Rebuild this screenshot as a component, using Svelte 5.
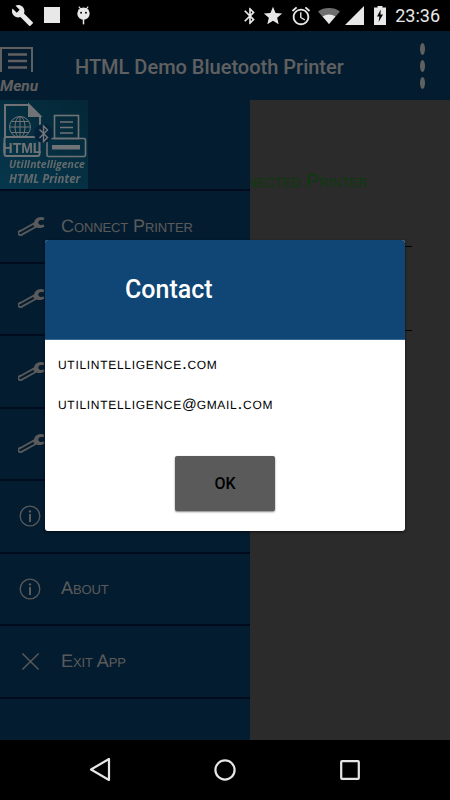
<script>
  const drawerRows = [
    { icon: 'wrench', label: 'Connect Printer' },
    { icon: 'wrench' },
    { icon: 'wrench' },
    { icon: 'wrench' },
    { icon: 'info' },
    { icon: 'info', label: 'About' },
    { icon: 'close', label: 'Exit App' }
  ];
</script>

<div class="screen">
  <header class="status">
    <div class="status-left">
      <svg class="st-wrench" viewBox="0 0 24 24"><path d="M22.7 19l-9.1-9.1c.9-2.3.4-5-1.5-6.9-2-2-5-2.4-7.4-1.3L9 6 6 9 1.6 4.7C.4 7.1.9 10.1 2.9 12.1c1.9 1.9 4.6 2.4 6.9 1.5l9.1 9.1c.4.4 1 .4 1.4 0l2.3-2.3c.5-.4.5-1.1.1-1.4z" /></svg>
      <span class="st-square"></span>
      <svg class="st-debug" viewBox="0 0 16 20">
        <path d="M3 1l2.4 3M13 1l-2.4 3" stroke="#e8e8e8" stroke-width="1.2" fill="none" />
        <circle cx="8" cy="8.5" r="6.6" />
        <circle cx="5.4" cy="7.6" r="1" fill="#000" />
        <circle cx="10.6" cy="7.6" r="1" fill="#000" />
        <rect x="7.2" y="14" width="1.6" height="6" />
      </svg>
    </div>
    <div class="status-right">
      <svg class="st-bt" viewBox="0 0 24 24"><path d="M17.71 7.71L12 2h-1v7.59L6.41 5 5 6.41 10.59 12 5 17.59 6.41 19 11 14.41V22h1l5.71-5.71-4.3-4.29 4.3-4.29zM13 5.83l1.88 1.88L13 9.59V5.83zm1.88 10.46L13 18.17v-3.76l1.88 1.88z" /></svg>
      <svg class="st-star" viewBox="0 0 24 24"><path d="M12 17.27L18.18 21l-1.64-7.03L22 9.24l-7.19-.61L12 2 9.19 8.63 2 9.24l5.46 4.73L5.82 21z" /></svg>
      <svg class="st-alarm" viewBox="0 0 24 24"><path d="M22 5.72l-4.6-3.86-1.29 1.53 4.6 3.86L22 5.72zM7.88 3.39L6.6 1.86 2 5.71l1.29 1.53 4.59-3.85zM12.5 8H11v6l4.75 2.85.75-1.23-4-2.37V8zM12 4c-4.97 0-9 4.03-9 9s4.02 9 9 9c4.97 0 9-4.03 9-9s-4.03-9-9-9zm0 16c-3.87 0-7-3.13-7-7s3.13-7 7-7 7 3.13 7 7-3.13 7-7 7z" /></svg>
      <svg class="st-wifi" viewBox="0 0 22 16">
        <path d="M11 16L0 3.4C3 1.2 6.8 0 11 0s8 1.2 11 3.4z" fill="#6e6e6e" />
        <path d="M11 16L4.6 8.6C6.4 7.3 8.6 6.6 11 6.6s4.6.7 6.4 2z" />
      </svg>
      <svg class="st-signal" viewBox="0 0 19 19"><path d="M0 19h19V0z" /></svg>
      <svg class="st-battery" viewBox="0 0 12 19">
        <path d="M3.5 0h5v1.6H12V19H0V1.6h3.5z" />
        <path d="M6.8 3.6L3 10.6h2.4L4.6 16 9 8.4H6.4z" fill="#000" />
      </svg>
      <span class="time">23:36</span>
    </div>
  </header>

  <div class="app">
    <div class="appbar">
      <div class="menu-btn">
        <svg class="menu-icon" viewBox="0 0 34 25">
          <path d="M1 25V1h31v24" fill="none" stroke="#c0c0c0" stroke-width="2" />
          <path d="M8 7.5h19M8 14h19M8 20.5h19" stroke="#c0c0c0" stroke-width="2.4" />
        </svg>
        <span class="menu-label">Menu</span>
      </div>
      <h1>HTML Demo Bluetooth Printer</h1>
      <div class="overflow">
        <span></span><span></span><span></span>
      </div>
    </div>

    <div class="main">
      <section class="content">
        <p class="connected">Connected Printer</p>
        <div class="lines"></div>
      </section>

      <nav class="drawer">
        <div class="logo-row">
          <svg class="logo" viewBox="0 0 88 89">
            <defs>
              <linearGradient id="tile" x1="0.9" y1="0" x2="0.2" y2="1">
                <stop offset="0" stop-color="#08506f" />
                <stop offset="1" stop-color="#0c6c96" />
              </linearGradient>
            </defs>
            <rect width="88" height="89" fill="url(#tile)" />
            <g fill="none" stroke="#dfe7ea" stroke-width="2">
              <path d="M5 38V5h24l11 11v22" />
              <path d="M29 5v11h11z" fill="#dfe7ea" />
              <rect x="4.5" y="37" width="35" height="19" rx="2" />
              <g stroke-width="1">
                <circle cx="20" cy="27" r="10.5" />
                <ellipse cx="20" cy="27" rx="5" ry="10.5" />
                <path d="M9.5 27h21M11 21.5h18M11 32.5h18M20 16.5v21" />
              </g>
              <rect x="54.5" y="15.5" width="24" height="23" stroke-width="1.6" />
              <path d="M60 22h13M60 27.5h13M60 33h13" stroke-width="1.6" />
              <rect x="47" y="38.5" width="38.5" height="18" rx="1.5" stroke-width="1.6" />
            </g>
            <text x="22" y="52.5" class="logo-html">HTML</text>
            <rect x="52" y="45" width="28" height="4.5" fill="#dfe7ea" />
            <circle cx="43.5" cy="33.5" r="9.5" fill="#0a4476" />
            <path d="M39.5 29.5l8 8-4 4v-15.5l4 4-8 8" fill="none" stroke="#eef2f4" stroke-width="1.4" />
            <text x="9" y="68" class="logo-text">UtilIntelligence</text>
            <text x="9" y="83" class="logo-text big">HTML Printer</text>
          </svg>
        </div>

        {#each drawerRows as row}
          <div class="row">
            <span class="row-icon">
              {#if row.icon === 'wrench'}
                <svg viewBox="0 0 28 20" class="ic-wrench">
                  <path d="M1.6 15.6L16 7.6l2 3.6-14.4 8a2 2 0 0 1-2-4z" fill="none" stroke="#b4b4b4" stroke-width="1.8" />
                  <path d="M27.4 1.4c-3-1.6-7-.8-9.2 1.6-1.2 1.4-1.8 3-1.6 4.8l2 3.4c2 1.2 5.4 1.6 8.8-.4l-.6-2.4c-2 .8-4.4.6-5.4-.8-.6-1-.4-2 .2-2.8 1-1.2 3.4-1.2 5-.8z" fill="#b4b4b4" />
                </svg>
              {:else if row.icon === 'info'}
                <svg viewBox="0 0 22 22" class="ic-info">
                  <circle cx="11" cy="11" r="9.8" fill="none" stroke="#b4b4b4" stroke-width="1.3" />
                  <circle cx="11" cy="6.4" r="1.2" fill="#b4b4b4" />
                  <path d="M11 9v8" stroke="#b4b4b4" stroke-width="2" />
                </svg>
              {:else}
                <svg viewBox="0 0 20 20" class="ic-close">
                  <path d="M1.5 1.5l17 17M18.5 1.5l-17 17" stroke="#b4b4b4" stroke-width="1.5" fill="none" />
                </svg>
              {/if}
            </span>
            {#if row.label}<span class="row-label">{row.label}</span>{/if}
          </div>
        {/each}
      </nav>
    </div>

    <div class="scrim"></div>

    <div class="dialog">
      <div class="dialog-head">Contact</div>
      <div class="dialog-body">
        <p>utilintelligence.com</p>
        <p>utilintelligence<span class="at">@</span>gmail.com</p>
        <button class="ok">OK</button>
      </div>
    </div>
  </div>

  <footer class="navbar">
    <svg viewBox="0 0 22 25" class="nav-back"><path d="M20 2v21L2 12.5z" fill="none" stroke="#e6e6e6" stroke-width="2.2" stroke-linejoin="round" /></svg>
    <svg viewBox="0 0 22 22" class="nav-home"><circle cx="11" cy="11" r="9.6" fill="none" stroke="#e6e6e6" stroke-width="2.2" /></svg>
    <svg viewBox="0 0 20 20" class="nav-recent"><rect x="1.2" y="1.2" width="17.6" height="17.6" rx="0.8" fill="none" stroke="#e6e6e6" stroke-width="2.2" /></svg>
  </footer>
</div>

<style>
  :global(body) {
    margin: 0;
    background: #000;
  }

  .screen {
    width: 450px;
    height: 800px;
    display: flex;
    flex-direction: column;
    overflow: hidden;
    font-family: "Liberation Sans", Arial, sans-serif;
  }

  /* status bar */
  .status {
    height: 31px;
    flex: none;
    background: #000;
    display: flex;
    justify-content: space-between;
    align-items: center;
    fill: #e8e8e8;
  }

  .status-left,
  .status-right {
    display: flex;
    align-items: center;
  }

  .status-left {
    padding-left: 11px;
  }

  .status-right {
    padding-right: 10px;
  }

  .st-wrench {
    width: 23px;
    height: 23px;
    margin-top: -1px;
  }

  .st-square {
    width: 16px;
    height: 16px;
    margin-left: 10px;
    margin-top: -1px;
    background: #e8e8e8;
  }

  .st-debug {
    width: 15px;
    height: 20px;
    margin-left: 16px;
    margin-top: -2px;
  }

  .st-bt {
    width: 20px;
    height: 20px;
  }

  .st-star {
    width: 22px;
    height: 22px;
    margin-left: 2px;
  }

  .st-alarm {
    width: 22px;
    height: 22px;
    margin-left: 6px;
  }

  .st-wifi {
    width: 22px;
    height: 16px;
    margin-left: 6px;
  }

  .st-signal {
    width: 19px;
    height: 19px;
    margin-left: 5px;
  }

  .st-battery {
    width: 12px;
    height: 19px;
    margin-left: 10px;
  }

  .time {
    margin-left: 9px;
    color: #e8e8e8;
    font: 400 18px Roboto, sans-serif;
  }

  /* app */
  .app {
    flex: 1;
    min-height: 0;
    position: relative;
    display: flex;
    flex-direction: column;
  }

  .appbar {
    height: 69px;
    flex: none;
    background: #083860;
    display: flex;
    align-items: center;
    color: #c0c0c0;
  }

  .menu-btn {
    width: 75px;
    flex: none;
    display: flex;
    flex-direction: column;
    padding-top: 12px;
  }

  .menu-icon {
    width: 34px;
    height: 25px;
  }

  .menu-label {
    font: italic 700 15.5px/20px Roboto, sans-serif;
    margin-top: 4px;
  }

  h1 {
    flex: 1;
    margin: 2px 0 0;
    font: 500 20px Roboto, sans-serif;
    white-space: nowrap;
  }

  .overflow {
    width: 55px;
    flex: none;
    display: flex;
    flex-direction: column;
    align-items: center;
    gap: 5px;
  }

  .overflow span {
    width: 5px;
    height: 12px;
    border-radius: 50%;
    background: #c0c0c0;
  }

  .main {
    flex: 1;
    min-height: 0;
    position: relative;
  }

  .content {
    height: 100%;
    background: #565656;
    padding-left: 214px;
    padding-right: 38px;
    padding-top: 70px;
    box-sizing: border-box;
  }

  .connected {
    margin: 0;
    color: #1a751a;
    font-size: 19.2px;
    line-height: 24px;
    font-variant: small-caps;
    text-rendering: geometricPrecision;
    white-space: nowrap;
  }

  .lines {
    height: 83px;
    margin-top: 52px;
    border-top: 1px solid #000;
    border-bottom: 1px solid #000;
  }

  .drawer {
    position: absolute;
    left: 0;
    top: 0;
    bottom: 0;
    width: 250px;
    background: #083860;
  }

  .logo-row {
    height: 89px;
    border-bottom: 2px solid #00183c;
  }

  .logo {
    display: block;
    width: 88px;
    height: 89px;
    filter: blur(0.6px);
  }

  .logo-html {
    font: 700 14px "Liberation Sans", sans-serif;
    text-anchor: middle;
    fill: #dfe7ea;
  }

  .logo-text {
    font: italic 700 10.5px "Open Sans", sans-serif;
    fill: #c4d2d9;
  }

  .logo-text.big {
    font-size: 11.5px;
  }

  .row {
    height: 70.5px;
    border-bottom: 2px solid #00183c;
    display: flex;
    align-items: center;
  }

  .row-icon {
    width: 61px;
    flex: none;
    display: flex;
    padding-left: 18px;
    box-sizing: border-box;
  }

  .ic-wrench {
    width: 27px;
    height: 20px;
    margin-top: -1px;
  }

  .ic-info {
    width: 22px;
    height: 22px;
    margin-left: 1px;
  }

  .ic-close {
    width: 19px;
    height: 19px;
    margin-left: 3px;
  }

  .row-label {
    color: #b4b4b4;
    font-size: 18px;
    letter-spacing: -0.1px;
    font-variant: small-caps;
    text-rendering: geometricPrecision;
    white-space: nowrap;
  }

  .scrim {
    position: absolute;
    inset: 0;
    background: rgba(0, 0, 0, 0.5);
  }

  /* dialog */
  .dialog {
    position: absolute;
    left: 45px;
    top: 209px;
    width: 360px;
    height: 291px;
    border-radius: 3px;
    overflow: hidden;
    background: #fff;
    box-shadow: 0 1px 3px rgba(0, 0, 0, 0.6);
    display: flex;
    flex-direction: column;
  }

  .dialog-head {
    height: 100px;
    flex: none;
    box-sizing: border-box;
    padding-left: 80px;
    display: flex;
    align-items: center;
    background: #0f4675;
    color: #fff;
    font: 500 25px Roboto, sans-serif;
    border-bottom: 1px solid #3a6a92;
  }

  .dialog-body {
    flex: 1;
    padding: 13px 13px 20px;
    display: flex;
    flex-direction: column;
    color: #000;
  }

  .dialog-body p {
    margin: 0 0 19px;
    font-size: 17.4px;
    line-height: 21px;
    letter-spacing: 0.7px;
    font-variant: small-caps;
    text-rendering: geometricPrecision;
  }

  .at {
    font-size: 14.5px;
    letter-spacing: 0;
  }

  .ok {
    margin: auto auto 0;
    width: 100px;
    height: 55px;
    border: none;
    border-radius: 2px;
    background: #5a5a5a;
    color: #000;
    font: 500 16px Roboto, sans-serif;
    box-shadow: 0 1px 2px rgba(0, 0, 0, 0.5);
  }

  /* nav bar */
  .navbar {
    height: 60px;
    flex: none;
    background: #000;
    position: relative;
  }

  .nav-back {
    width: 22px;
    height: 25px;
    position: absolute;
    left: 89px;
    top: 17px;
  }

  .nav-home {
    width: 22px;
    height: 22px;
    position: absolute;
    left: 214px;
    top: 19px;
  }

  .nav-recent {
    width: 20px;
    height: 20px;
    position: absolute;
    left: 340px;
    top: 20px;
  }
</style>
